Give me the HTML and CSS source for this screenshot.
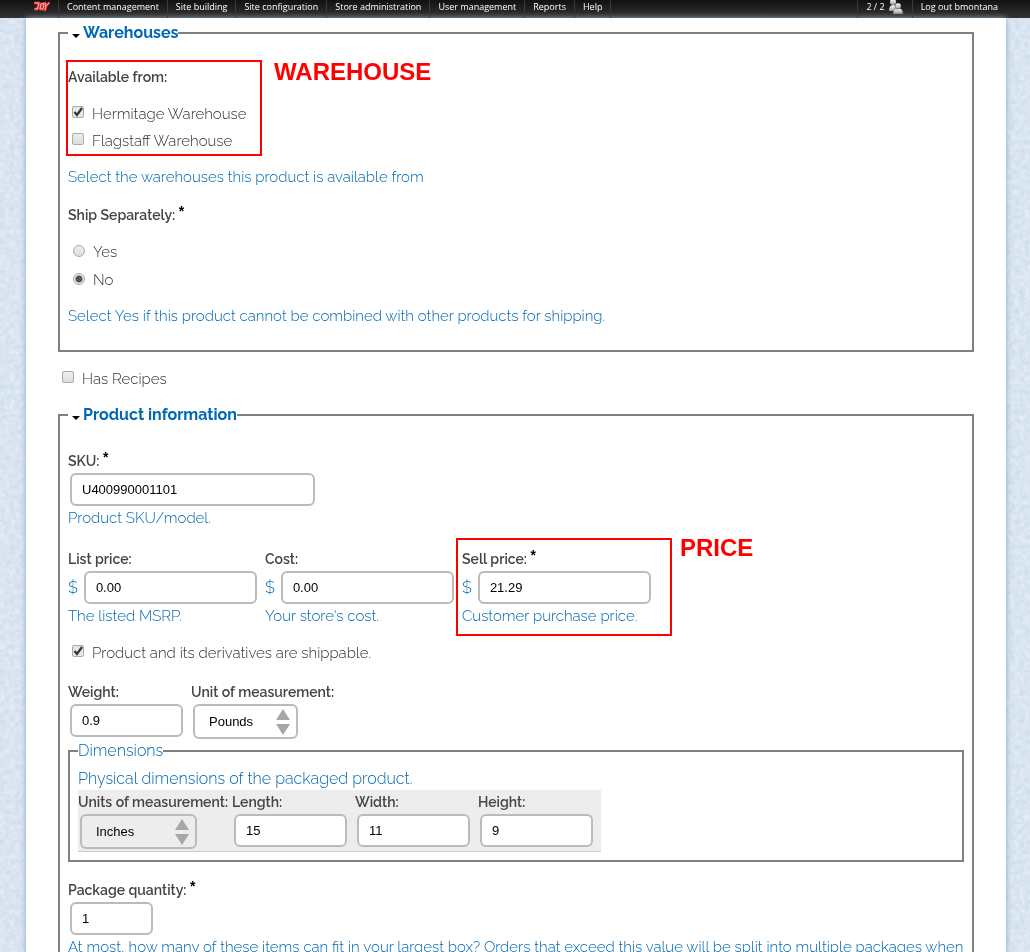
FILE: index.html
```html
<!DOCTYPE html>
<html lang="en">
<head>
<meta charset="utf-8">
<title>Edit product</title>
<link rel="stylesheet" href="styles.css">
</head>
<body>
<svg class="paper" aria-hidden="true">
  <filter id="grain"><feTurbulence type="fractalNoise" baseFrequency="0.2" numOctaves="4" seed="4"/><feColorMatrix values="0 0 0 0 1  0 0 0 0 1  0 0 0 0 1  0.7 0 0 0 -0.1"/></filter>
  <rect width="100%" height="100%" filter="url(#grain)"/>
</svg>
<nav class="bar">
  <ul class="menu">
    <li class="home"><a href="#" aria-label="Home"><svg width="16" height="12" viewBox="0 0 16 12" fill="none" stroke-linecap="round" stroke-linejoin="round"><g stroke="#d8232f" stroke-width="3"><path d="M1 3h4L3.500 9H1M7 4L6 9h3l1-5zM11 3l1 3 3-3M12 6l-1 4"/></g><g stroke="#ffc0a8" stroke-width="1"><path d="M1 3h4L3.500 9H1M7 4L6 9h3l1-5zM11 3l1 3 3-3M12 6l-1 4"/></g></svg></a></li>
    <li><a href="#">Content management</a></li>
    <li><a href="#">Site building</a></li>
    <li><a href="#">Site configuration</a></li>
    <li><a href="#">Store administration</a></li>
    <li><a href="#">User management</a></li>
    <li><a href="#">Reports</a></li>
    <li><a href="#">Help</a></li>
  </ul>
  <ul class="menu account">
    <li><a href="#" class="users">2 / 2 <svg width="16" height="16" viewBox="0 0 16 16"><defs><linearGradient id="u" x2="0" y2="1"><stop stop-color="#fff"/><stop offset="1" stop-color="#999"/></linearGradient></defs><g fill="url(#u)"><circle cx="5" cy="2" r="3"/><path d="M1 11q0-6 4-6t5 6z"/></g><g fill="url(#u)" stroke="#555" stroke-width=".5"><path d="M5 14q0-6 5-6t5 6z"/><circle cx="10" cy="6" r="3"/></g></svg></a></li>
    <li><a href="#">Log out bmontana</a></li>
  </ul>
</nav>
<main class="page">
  <fieldset class="panel warehouses">
    <legend><a href="#"><span class="arrow"></span>Warehouses</a></legend>
    <div class="group" role="group" aria-labelledby="available">
      <div class="mark mark-warehouse"><span>WAREHOUSE</span></div>
      <div class="label" id="available">Available from:</div>
      <div class="options">
        <label class="option"><input type="checkbox" checked>Hermitage Warehouse</label>
        <label class="option"><input type="checkbox">Flagstaff Warehouse</label>
      </div>
    </div>
    <p class="hint">Select the warehouses this product is available from</p>
    <div class="group ship" role="radiogroup" aria-labelledby="ship">
      <div class="label" id="ship">Ship Separately: <sup>*</sup></div>
      <div class="options">
        <label class="option"><input type="radio" name="ship">Yes</label>
        <label class="option"><input type="radio" name="ship" checked>No</label>
      </div>
    </div>
    <p class="hint">Select Yes if this product cannot be combined with other products for shipping.</p>
  </fieldset>

  <label class="option recipes"><input type="checkbox">Has Recipes</label>

  <fieldset class="panel">
    <legend><a href="#"><span class="arrow"></span>Product information</a></legend>
    <div class="field">
      <label class="label" for="sku">SKU: <sup>*</sup></label>
      <input class="text wide" id="sku" type="text" value="U400990001101">
      <p class="hint">Product SKU/model.</p>
    </div>
    <div class="prices">
      <div class="field">
        <label class="label" for="list">List price:</label>
        <div class="money">$<input class="text" id="list" type="text" value="0.00"></div>
        <p class="hint">The listed MSRP.</p>
      </div>
      <div class="field">
        <label class="label" for="cost">Cost:</label>
        <div class="money">$<input class="text" id="cost" type="text" value="0.00"></div>
        <p class="hint">Your store's cost.</p>
      </div>
      <div class="field">
        <div class="mark mark-price"><span>PRICE</span></div>
        <label class="label" for="sell">Sell price: <sup>*</sup></label>
        <div class="money">$<input class="text" id="sell" type="text" value="21.29"></div>
        <p class="hint">Customer purchase price.</p>
      </div>
    </div>
    <label class="option shippable"><input type="checkbox" checked>Product and its derivatives are shippable.</label>
    <div class="measures">
      <div class="field">
        <label class="label" for="weight">Weight:</label>
        <input class="text small" id="weight" type="text" value="0.9">
      </div>
      <div class="field">
        <label class="label" for="wunit">Unit of measurement:</label>
        <select id="wunit"><option>Pounds</option><option>Kilograms</option></select>
      </div>
    </div>
    <fieldset class="dimensions">
      <legend>Dimensions</legend>
      <p class="intro">Physical dimensions of the packaged product.</p>
      <div class="sizes">
        <div class="field units">
          <label class="label" for="dunit">Units of measurement:</label>
          <select id="dunit" class="dunit"><option>Inches</option><option>Centimeters</option></select>
        </div>
        <div class="field">
          <label class="label" for="length">Length:</label>
          <input class="text small" id="length" type="text" value="15">
        </div>
        <div class="field">
          <label class="label" for="width">Width:</label>
          <input class="text small" id="width" type="text" value="11">
        </div>
        <div class="field">
          <label class="label" for="height">Height:</label>
          <input class="text small" id="height" type="text" value="9">
        </div>
      </div>
    </fieldset>
    <div class="field package">
      <label class="label" for="qty">Package quantity: <sup>*</sup></label>
      <input class="text tiny" id="qty" type="text" value="1">
      <p class="hint">At most, how many of these items can fit in your largest box? Orders that exceed this value will be split into multiple packages when</p>
    </div>
  </fieldset>
</main>
</body>
</html>
```
FILE: styles.css
```css
* { box-sizing: border-box; }
body {
  margin: 0;
  height: 100vh;
  overflow: hidden;
  background: #cddced;
  color: #333;
  font: 300 15px/20px Raleway, Lato, sans-serif;
}
a { color: inherit; text-decoration: none; }
p { margin: 0; }
.paper { position: fixed; inset: 0; width: 100%; height: 100%; z-index: -1; }

.bar {
  display: flex;
  justify-content: space-between;
  height: 18px;
  padding: 0 24px 0 26px;
  background: linear-gradient(#111, #333);
  color: #fff;
  font: 400 9px/14px "Open Sans", sans-serif;
}
.menu { display: flex; margin: 0; padding: 0; list-style: none; }
.menu li { padding: 0 8px; border-right: 1px solid #3a3a3a; white-space: nowrap; }
.menu svg { display: block; }
.account li { border-right: 0; border-left: 1px solid #3a3a3a; }
.users { display: flex; gap: 3px; height: 14px; }

.page {
  margin: 0 24px 0 26px;
  padding: 4px 32px 0;
  background: #fff;
  box-shadow: 0 0 6px #8aa9c4;
}
fieldset { min-width: 0; margin: 0; border: 2px solid #808080; }
.panel { padding: 0 8px 24px; }
.panel > legend {
  padding: 0 0 0 4px;
  color: #0068b3;
  font-size: 16px;
  font-weight: 700;
  line-height: 22px;
}
.arrow {
  display: inline-block;
  margin-right: 3px;
  border: 4px solid transparent;
  border-top-color: #000;
  border-bottom: 0;
}
.label {
  display: block;
  color: #444;
  font-size: 14px;
  font-weight: 600;
  white-space: nowrap;
}
.label sup {
  color: #000;
  font: 700 14px/0 "Liberation Sans", sans-serif;
  vertical-align: 4px;
}
.hint, .money { color: #0068b3; white-space: nowrap; }
.group { position: relative; padding-top: 23px; }
.options { padding: 13px 0; }
.option { display: flex; align-items: center; height: 27px; }
.ship { padding-top: 18px; }
.ship .options { padding: 13px 0 12px; }
.ship .option { height: 28px; padding-left: 1px; }
.recipes { margin: 13px 0 12px; }

input[type="checkbox"], input[type="radio"] {
  appearance: none;
  width: 12px;
  height: 12px;
  margin: 0 8px 3px 4px;
  border: 1px solid #aaa;
  border-radius: 2px;
  background: linear-gradient(#eee, #ddd);
}
input[type="radio"] { border-radius: 50%; }
input[type="radio"]:checked { background: radial-gradient(#555 3px, #e8e8e8 4px); }
input[type="checkbox"]:checked {
  background: url("data:image/svg+xml,%3Csvg xmlns='http://www.w3.org/2000/svg' viewBox='0 0 10 10'%3E%3Cpath d='M1.500 5l2.500 3 5-7' fill='none' stroke='%23333' stroke-width='2.200'/%3E%3C/svg%3E") #e6e6e6;
}

.field { position: relative; }
.text, select {
  display: block;
  height: 33px;
  margin: 2px;
  padding: 0 10px;
  border: 2px solid #bbb;
  border-radius: 6px;
  background: #fff;
  color: #000;
  font: 13px "Liberation Sans", sans-serif;
}
.wide { width: 245px; }
.small { width: 113px; }
.tiny { width: 83px; }
select {
  appearance: none;
  width: 105px;
  height: 35px;
  padding-left: 14px;
  background: url("data:image/svg+xml,%3Csvg xmlns='http://www.w3.org/2000/svg' width='14' height='26'%3E%3Cpath d='M0 11L7 0l7 11zM0 15h14L7 26z' fill='%23a5a7aa'/%3E%3C/svg%3E") no-repeat right 6px center;
}
.dunit { width: 117px; }
.panel > .field { padding-top: 25px; }
.prices { display: flex; gap: 24px; margin-top: 21px; }
.money { display: flex; align-items: center; width: 173px; font-size: 16px; }
.money .text { flex: none; width: 173px; margin-left: 6px; }
.prices .field { width: 173px; }
.shippable { margin-top: 13px; }
.measures { display: flex; gap: 6px; margin-top: 16px; }

.dimensions { padding: 0 8px 8px; }
.dimensions legend { padding: 0; color: #0068b3; font-size: 16px; }
.dimensions .intro { padding: 8px 0 1px; color: #0068b3; font-size: 16px; }
.sizes {
  display: flex;
  gap: 6px;
  width: fit-content;
  padding: 2px 6px 0 0;
  border-bottom: 1px solid #ccc;
  background: #ededed;
}
.units { width: 148px; }
.sizes select { background-color: #ededed; }
.panel > .package { padding-top: 18px; }

.mark { position: absolute; border: 2px solid #f00; pointer-events: none; }
.mark span {
  position: absolute;
  color: #f00;
  font: 700 24px/24px "Liberation Sans", sans-serif;
}
.mark-warehouse { top: 16px; left: -2px; width: 196px; height: 96px; }
.mark-warehouse span { top: -2px; left: 206px; }
.mark-price { top: -11px; left: -6px; width: 216px; height: 98px; }
.mark-price span { top: -4px; left: 222px; }
```
